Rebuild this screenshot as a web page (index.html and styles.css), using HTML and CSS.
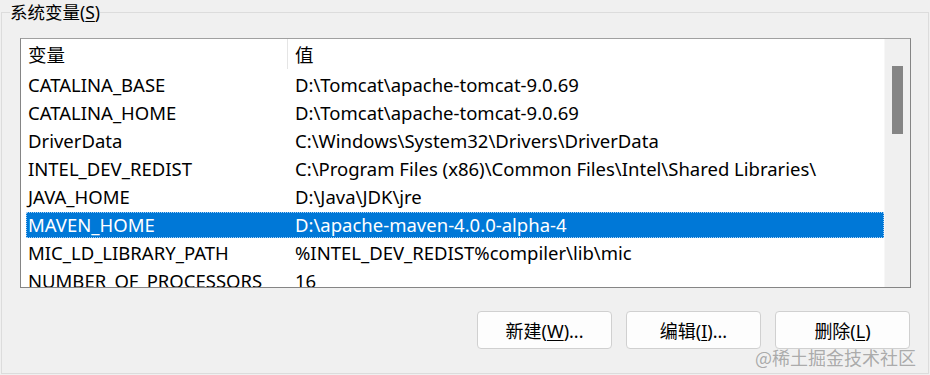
FILE: index.html
```html
<!DOCTYPE html>
<html lang="zh-CN">
<head>
<meta charset="utf-8">
<title>系统变量</title>
<link rel="stylesheet" href="styles.css">
</head>
<body>
<fieldset class="group">
  <legend class="group-title">系统变量(<u>S</u>)</legend>
  <div class="listbox">
    <div class="list">
      <div class="row header">
        <div class="cell c1">变量</div>
        <div class="cell c2 sep">值</div>
      </div>
      <div class="row"><div class="cell c1">CATALINA_BASE</div><div class="cell c2">D:\Tomcat\apache-tomcat-9.0.69</div></div>
      <div class="row"><div class="cell c1">CATALINA_HOME</div><div class="cell c2">D:\Tomcat\apache-tomcat-9.0.69</div></div>
      <div class="row"><div class="cell c1">DriverData</div><div class="cell c2">C:\Windows\System32\Drivers\DriverData</div></div>
      <div class="row"><div class="cell c1">INTEL_DEV_REDIST</div><div class="cell c2">C:\Program Files (x86)\Common Files\Intel\Shared Libraries\</div></div>
      <div class="row"><div class="cell c1">JAVA_HOME</div><div class="cell c2">D:\Java\JDK\jre</div></div>
      <div class="row selected"><div class="cell c1">MAVEN_HOME</div><div class="cell c2">D:\apache-maven-4.0.0-alpha-4</div></div>
      <div class="row"><div class="cell c1">MIC_LD_LIBRARY_PATH</div><div class="cell c2">%INTEL_DEV_REDIST%compiler\lib\mic</div></div>
      <div class="row"><div class="cell c1">NUMBER_OF_PROCESSORS</div><div class="cell c2">16</div></div>
    </div>
    <div class="scrollbar"><div class="thumb"></div></div>
  </div>
  <div class="buttons">
    <button class="btn">新建(<u>W</u>)...</button>
    <button class="btn">编辑(<u>I</u>)...</button>
    <button class="btn">删除(<u>L</u>)</button>
  </div>
</fieldset>
<div class="watermark">@稀土掘金技术社区</div>
</body>
</html>
```
FILE: styles.css
```css
* { box-sizing: border-box; }
html, body {
  margin: 0;
  padding: 0;
  background: #f0f0f0;
  width: 930px;
  height: 375px;
  overflow: hidden;
  font-family: "Noto Sans", "Noto Sans CJK SC", sans-serif;
  font-size: 18.5px;
  color: #000;
}
.group {
  margin: 0 0 0 1px;
  width: 928px;
  height: 374px;
  border: 1px solid #dcdcdc;
  padding: 14px 17px 0 18px;
  min-width: 0;
}
.group-title {
  padding: 0;
  margin-left: -10px;
  line-height: 24px;
  height: 24px;
  font-size: 17.5px;
  color: #000;
}
.group-title u { text-underline-offset: 2px; }
.listbox {
  display: flex;
  height: 250px;
  border: 1px solid #858585;
  border-top-color: #a0a0a0;
  background: #fff;
}
.list {
  flex: 1;
  overflow: hidden;
  padding-left: 5px;
}
.row {
  display: flex;
  height: 28px;
  align-items: center;
  line-height: 26px;
  white-space: nowrap;
}
.row.header { height: 32px; }
.cell { height: 26px; }
.c1 { width: 261px; padding-left: 2px; overflow: hidden; }
.c2 { flex: 1; padding-left: 8px; }
.sep { position: relative; }
.sep::before {
  content: "";
  position: absolute;
  left: 0;
  top: -3px;
  height: 30px;
  width: 1px;
  background: #e5e5e5;
}
.row.selected .cell {
  background: #0078d7;
  color: #fff;
}
.row.selected {
  outline: 1px dotted #a9d1f5;
  outline-offset: -1px;
  height: 26px;
  margin: 1px 0;
}
.scrollbar {
  width: 26px;
  background: #f0f0f0;
  border-left: 1px solid #f7f7f7;
  padding: 27px 0 0 7px;
}
.thumb {
  width: 11px;
  height: 68px;
  background: #858585;
}
.buttons {
  display: flex;
  justify-content: flex-end;
  gap: 14px;
  margin-top: 23px;
  padding-right: 1px;
}
.btn {
  width: 135px;
  height: 38px;
  border: 1px solid #d0d0d0;
  border-radius: 4px;
  background: #fdfdfd;
  font-family: "Noto Sans", "Noto Sans CJK SC", sans-serif;
  font-size: 18px;
  color: #000;
  padding: 0;
}
.btn u { text-underline-offset: 2px; }
.watermark {
  position: absolute;
  left: 755px;
  top: 344px;
  font-family: "Noto Sans CJK SC", sans-serif;
  font-size: 18px;
  color: rgba(130, 130, 130, 0.65);
}
```
